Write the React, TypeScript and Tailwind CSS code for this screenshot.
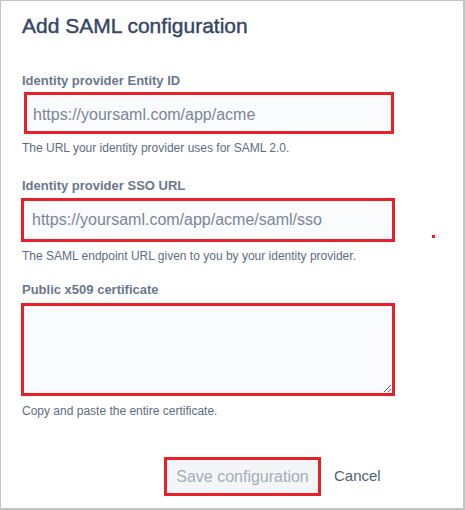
export default function App() {
  return (
    <div
      className="relative w-[465px] h-[510px] bg-white border-t border-l border-r-2 border-b-2 border-[#c4c4c4] box-border pl-[21px] flex flex-col"
      style={{ fontFamily: '"Liberation Sans", Arial, sans-serif' }}
    >
      <h1 className="pt-[13px] text-[21px] leading-[24px] text-[#344563] font-normal [-webkit-text-stroke:0.4px_#344563]">
        Add SAML configuration
      </h1>

      <div className="mt-[35px] text-[13px] leading-[16px] font-bold text-[#6b778c]">
        Identity provider Entity ID
      </div>
      <div className="mt-[3px] ml-[2px] w-[370px] h-[42px] box-border border-[3px] border-[#e8202a] bg-[#fafbfc] pt-[10px] pl-[6px] text-[16px] leading-[20px] text-[#7a869a] whitespace-nowrap">
        https://yoursaml.com/app/acme
      </div>
      <div className="mt-[6px] text-[12px] leading-[16px] text-[#5e6c84]">
        The URL your identity provider uses for SAML 2.0.
      </div>

      <div className="mt-[22px] text-[13px] leading-[16px] font-bold text-[#6b778c]">
        Identity provider SSO URL
      </div>
      <div className="mt-[4px] ml-[-1px] w-[374px] h-[44px] box-border border-[3px] border-[#e8202a] bg-[#fafbfc] pt-[9px] pl-[8px] text-[16px] leading-[20px] text-[#7a869a] whitespace-nowrap">
        https://yoursaml.com/app/acme/saml/sso
      </div>
      <div className="mt-[6px] text-[12px] leading-[16px] text-[#5e6c84]">
        The SAML endpoint URL given to you by your identity provider.
      </div>

      <div className="mt-[18px] text-[13px] leading-[16px] font-bold text-[#6b778c]">
        Public x509 certificate
      </div>
      <textarea
        readOnly
        className="mt-[5px] ml-[-1px] w-[374px] h-[93px] box-border border-[3px] border-[#e8202a] bg-[#fafbfc] resize-y outline-none block"
      />
      <div className="mt-[7px] text-[12px] leading-[16px] text-[#5e6c84]">
        Copy and paste the entire certificate.
      </div>

      <div className="mt-[38px] flex items-center">
        <div className="ml-[142px] w-[157px] h-[39px] box-border border-[3px] border-[#e8202a] bg-[#f4f5f7] flex items-center justify-center text-[16px] text-[#a5adba] whitespace-nowrap">
          Save configuration
        </div>
        <div className="ml-[13px] text-[15px] text-[#505f79]">Cancel</div>
      </div>

      <div className="absolute left-[431px] top-[234px] w-[3px] h-[3px] bg-[#e8202a]" />
    </div>
  );
}
